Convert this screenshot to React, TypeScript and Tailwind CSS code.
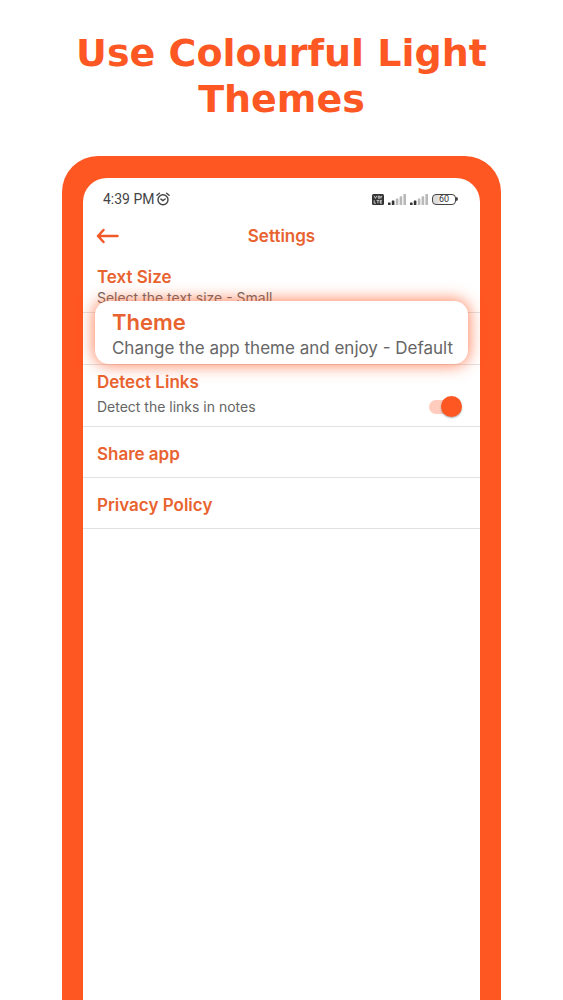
import { useState } from 'react';

function AlarmIcon() {
  return (
    <svg viewBox="0 0 14 14" className="h-3.5 w-3.5" fill="none" stroke="currentColor" strokeWidth="1.4" strokeLinecap="round">
      <circle cx="7" cy="7.7" r="5" />
      <path d="M4.9 7.1 L7 8.6 L9.2 7" />
      <path d="M0.9 3.3 L3.4 1.2 M13.1 3.3 L10.6 1.2" />
    </svg>
  );
}

function VolteIcon() {
  return (
    <svg viewBox="0 0 12 11" className="h-[11px] w-3">
      <rect width="12" height="11" rx="1.5" fill="#333" />
      <path
        d="M2 1.8 L3.4 4.4 L4.8 1.8 M6.2 2.2 H8 V4.2 H6.2 Z M9 4.5 V2.4 H10.2 M2.2 6.2 V9.2 H4 M4.6 6.4 H7.2 M5.9 6.4 V9.4 M10 6.4 H8.2 V9.2 H10 M8.2 7.8 H9.8"
        fill="none"
        stroke="#fff"
        strokeWidth="0.7"
      />
    </svg>
  );
}

function SignalIcon() {
  return (
    <svg viewBox="0 0 18 11" className="h-[11px] w-[18px]">
      <rect x="0" y="8.5" width="2.6" height="2.5" rx="0.5" fill="#333" />
      <rect x="3.8" y="6.5" width="2.6" height="4.5" rx="0.5" fill="#333" />
      <rect x="7.8" y="4.5" width="2.6" height="6.5" rx="0.5" fill="#b8b8b8" />
      <rect x="11.6" y="2.2" width="2.6" height="8.8" rx="0.5" fill="#b8b8b8" />
      <rect x="15.4" y="0" width="2.6" height="11" rx="0.5" fill="#b8b8b8" />
    </svg>
  );
}

function Battery() {
  return (
    <div className="flex items-center">
      <span className="flex h-[11px] w-6 items-center justify-center rounded-[4px] border border-[#444] bg-linear-to-r from-[#ddd] from-20% to-white to-40% text-[9px] leading-none text-[#333]">
        60
      </span>
      <span className="h-1 w-0.5 rounded-r-sm bg-[#444]" />
    </div>
  );
}

function BackArrow() {
  return (
    <svg viewBox="0 0 24 16" className="h-4 w-6" fill="none" stroke="currentColor" strokeWidth="2.5" strokeLinecap="round" strokeLinejoin="round">
      <path d="M21.5 8 H2 M7.5 2 L2 8 L7.5 14" />
    </svg>
  );
}

export default function App() {
  const [detectLinks, setDetectLinks] = useState(true);

  return (
    <main className="flex min-h-screen flex-col bg-white font-['Inter',sans-serif]">
      <h1 className="mx-auto mt-[30px] max-w-[440px] text-center font-['DejaVu_Sans',sans-serif] text-[38px] leading-[46px] font-bold text-[#fd5824]">
        Use Colourful Light Themes
      </h1>

      <div className="mx-[11%] mt-[34px] flex grow flex-col rounded-t-[36px] bg-[#ff5722] px-[21px] pt-[22px]">
        <div className="grow rounded-t-[24px] bg-white">
          <div className="flex items-center justify-between pt-3 pr-[22px] pl-5 font-['Roboto',sans-serif] text-[#444]">
            <div className="flex items-center gap-0.5 text-sm leading-[18px]">
              <span>4:39 PM</span>
              <AlarmIcon />
            </div>
            <div className="flex items-center gap-1">
              <VolteIcon />
              <SignalIcon />
              <SignalIcon />
              <Battery />
            </div>
          </div>

          <header className="grid h-[53px] grid-cols-[24px_1fr_24px] items-center px-[13px] pt-0.5 text-[#e8632f]">
            <button type="button" aria-label="Back" className="text-[#f05a26]">
              <BackArrow />
            </button>
            <h2 className="text-center text-[17px] leading-6 font-semibold">Settings</h2>
          </header>

          <ul>
            <li className="h-[52px] border-b border-[#e2e2e2]">
              <button type="button" className="flex w-full flex-col px-3.5 pt-1 text-left">
                <span className="text-[17px] leading-6 font-semibold text-[#e8632f]">Text Size</span>
                <span className="text-sm leading-[18px] text-[#666]">Select the text size - Small</span>
              </button>
            </li>
            <li className="relative h-[52px] border-b border-[#e2e2e2]">
              <button
                type="button"
                className="absolute inset-x-3 -top-3 bottom-0 flex flex-col justify-center rounded-[14px] bg-white px-[17px] pt-0.5 text-left shadow-[0_0_16px_1px_#ff5722c0]"
              >
                <span className="text-[22px] leading-7 font-semibold text-[#e8632f]">Theme</span>
                <span className="text-[17px] leading-6 whitespace-nowrap text-[#666]">Change the app theme and enjoy - Default</span>
              </button>
            </li>
            <li className="flex h-[62px] items-start justify-between border-b border-[#e2e2e2] pr-[18px] pl-3.5">
              <label htmlFor="detect-links" className="flex flex-col pt-[5px]">
                <span className="text-[17px] leading-6 font-semibold text-[#e8632f]">Detect Links</span>
                <span className="mt-1 text-sm leading-[18px] text-[#666]">Detect the links in notes</span>
              </label>
              <input
                id="detect-links"
                type="checkbox"
                role="switch"
                checked={detectLinks}
                onChange={(e) => setDetectLinks(e.target.checked)}
                className="mt-[31px] flex h-[21px] w-[33px] appearance-none items-center before:h-3.5 before:w-7 before:rounded-full before:bg-[#ffccbd] after:-ml-7 after:h-[21px] after:w-[21px] after:shrink-0 after:rounded-full after:bg-[#bbb] after:shadow-[0_1px_2px_#0005] checked:after:-ml-4 checked:after:bg-[#ff5722]"
              />
            </li>
            <li className="h-[51px] border-b border-[#e2e2e2]">
              <a href="#share" className="flex h-full items-center px-3.5 pt-1 text-[17px] leading-6 font-semibold text-[#e8632f]">
                Share app
              </a>
            </li>
            <li className="h-[51px] border-b border-[#e2e2e2]">
              <a href="#privacy" className="flex h-full items-center px-3.5 pt-1 text-[17px] leading-6 font-semibold text-[#e8632f]">
                Privacy Policy
              </a>
            </li>
          </ul>
        </div>
      </div>
    </main>
  );
}
